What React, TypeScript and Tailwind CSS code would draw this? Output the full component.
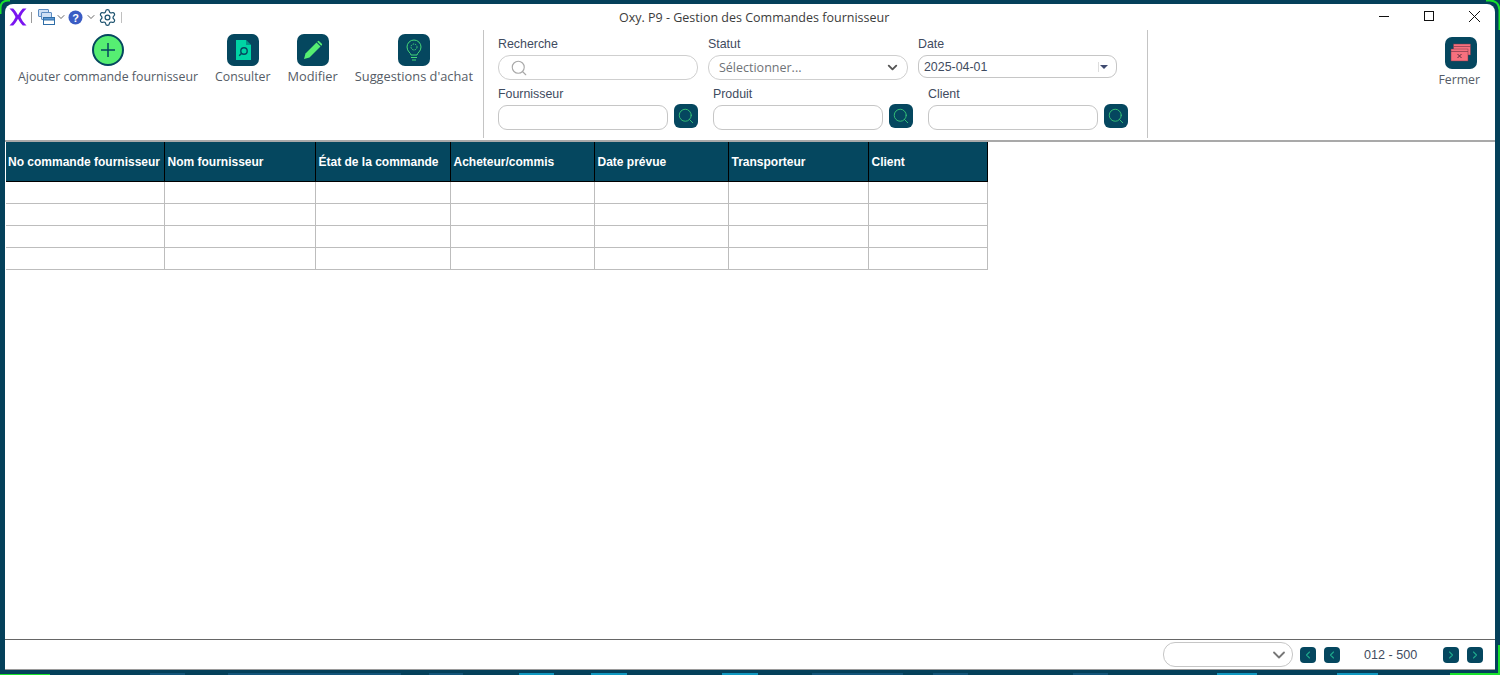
import React from "react";
import { ChevronDown, ChevronLeft, ChevronRight, Search, Settings } from "lucide-react";

const columns = [
  { label: "No commande fournisseur", w: "w-[158px]", pad: "pl-[2px]" },
  { label: "Nom fournisseur", w: "w-[151px]", pad: "pl-[3px]" },
  { label: "État de la commande", w: "w-[135px]", pad: "pl-[3px]" },
  { label: "Acheteur/commis", w: "w-[144px]", pad: "pl-[3px]" },
  { label: "Date prévue", w: "w-[134px]", pad: "pl-[3px]" },
  { label: "Transporteur", w: "w-[140px]", pad: "pl-[3px]" },
  { label: "Client", w: "w-[119px]", pad: "pl-[3px]" },
];

const taskbarBits = [
  { w: "w-[150px]", c: "bg-transparent" },
  { w: "w-[35px]", c: "bg-[#14557a]" },
  { w: "w-[43px]", c: "bg-transparent" },
  { w: "w-[173px]", c: "bg-[#14557a]" },
  { w: "w-[28px]", c: "bg-transparent" },
  { w: "w-[34px]", c: "bg-[#14557a]" },
  { w: "w-[56px]", c: "bg-transparent" },
  { w: "w-[35px]", c: "bg-[#1098c0]" },
  { w: "w-[37px]", c: "bg-transparent" },
  { w: "w-[36px]", c: "bg-[#1098c0]" },
  { w: "w-[95px]", c: "bg-transparent" },
  { w: "w-[36px]", c: "bg-[#1098c0]" },
  { w: "w-[54px]", c: "bg-transparent" },
  { w: "w-[91px]", c: "bg-[#14557a]" },
  { w: "w-[30px]", c: "bg-transparent" },
  { w: "w-[35px]", c: "bg-[#14557a]" },
  { w: "w-[105px]", c: "bg-transparent" },
  { w: "w-[35px]", c: "bg-[#14557a]" },
  { w: "w-[109px]", c: "bg-transparent" },
  { w: "w-[40px]", c: "bg-[#1098c0]" },
  { w: "w-[80px]", c: "bg-transparent" },
  { w: "w-[41px]", c: "bg-[#1098c0]" },
];

function AppLogo() {
  return (
    <svg width="18" height="18" viewBox="0 0 18 18">
      <path d="M0.500 0.500h3.700C6.500 3 8 5.200 9 7.300 10 5.200 11.500 3 13.800 0.500h3.700C14.500 3.500 12.600 6.200 11.500 9c1.100 2.800 3 5.500 6 8.500h-3.700C11.500 15 10 12.800 9 10.700 8 12.800 6.500 15 4.200 17.500H0.500C3.500 14.500 5.400 11.800 6.500 9 5.400 6.200 3.500 3.500 0.500 0.500z" fill="#7a14f0" />
    </svg>
  );
}

function WindowsIcon() {
  return (
    <svg width="17" height="16" viewBox="0 0 17 16" fill="#cfe0f5" stroke="#5c8cc2" strokeWidth="1">
      <rect x="0.500" y="0.500" width="10" height="7" rx="0.500" />
      <rect x="3.500" y="3.500" width="10" height="7" rx="0.500" />
      <rect x="5.500" y="8.500" width="11" height="7" fill="#fff" stroke="#2f6ea8" />
      <rect x="5.500" y="8.500" width="11" height="2.500" fill="#5b95d2" stroke="#2f6ea8" />
    </svg>
  );
}

function HelpIcon() {
  return (
    <svg width="15" height="15" viewBox="0 0 15 15">
      <circle cx="7.500" cy="7.500" r="7" fill="#3a5cc4" />
      <text x="7.500" y="11.500" textAnchor="middle" fontSize="11" fontWeight="700" fontFamily="Liberation Sans, sans-serif" fill="#fff">?</text>
    </svg>
  );
}

function IconTile({ children }: { children: React.ReactNode }) {
  return <div className="flex h-8 w-8 items-center justify-center rounded-[7px] bg-[#05475f]">{children}</div>;
}

function ToolButton({ label, icon, size }: { label: string; icon: React.ReactNode; size: string }) {
  return (
    <div className="flex flex-col items-center">
      {icon}
      <span className={`mt-[1px] whitespace-nowrap ${size} leading-[19px] text-[#555c66]`}>{label}</span>
    </div>
  );
}

function Field({ label, children, className }: { label: string; children: React.ReactNode; className: string }) {
  return (
    <div className={className}>
      <div className="h-[20px] whitespace-nowrap pt-[1px] font-['Liberation_Sans',sans-serif] text-[12.4px] leading-[16px] text-[#3f4b60]">{label}</div>
      {children}
    </div>
  );
}

function LookupField({ label, className }: { label: string; className: string }) {
  return (
    <Field label={label} className={className}>
      <div className="flex items-start">
        <div className="h-[25px] w-[170px] rounded-[9px] border border-[#c6c6c6] bg-white" />
        <button className="ml-[6px] -mt-[1px] flex h-6 w-6 items-center justify-center rounded-[6px] bg-[#05475f]">
          <Search size={18} strokeWidth={1.200} color="#37c777" />
        </button>
      </div>
    </Field>
  );
}

function PageButton({ children, className = "" }: { children: React.ReactNode; className?: string }) {
  return (
    <button className={`flex h-4 w-4 items-center justify-center rounded-[4px] bg-[#05475f] ${className}`}>{children}</button>
  );
}

export default function App() {
  return (
    <div className="relative flex h-[675px] w-[1500px] flex-col overflow-hidden bg-[#04405a] pl-[5px] pr-[5px] pt-[4px] font-['Open_Sans',sans-serif]">
      {/* window */}
      <div className="flex h-[666px] flex-col rounded-t-[8px] border-b border-b-[#9a9a9a] bg-white">
        {/* title bar */}
        <div className="flex h-[25px] shrink-0 items-center">
          <div className="flex w-[614px] items-center pl-[4px] pt-[1px]">
            <AppLogo />
            <div className="ml-[4px] h-[11px] w-px bg-[#9a9a9a]" />
            <div className="ml-[6px]"><WindowsIcon /></div>
            <ChevronDown size={12} strokeWidth={1.500} color="#333" />
            <div className="ml-[1px]"><HelpIcon /></div>
            <ChevronDown size={12} strokeWidth={1.500} color="#333" className="ml-[2px]" />
            <Settings size={19} strokeWidth={1.600} color="#1f5470" className="ml-[1px]" />
            <div className="ml-[4px] h-[11px] w-px bg-[#c0c0c0]" />
          </div>
          <div className="whitespace-nowrap pt-[3px] text-[12.5px] text-[#3c3c3c]">Oxy. P9 - Gestion des Commandes fournisseur</div>
          <div className="ml-auto flex items-center pr-[15px] pb-[1px]">
            <div className="h-px w-[10px] bg-[#111]" />
            <div className="ml-[35px] h-[10px] w-[10px] border border-[#111]" />
            <svg width="11" height="11" viewBox="0 0 11 11" className="ml-[35px]" stroke="#111" strokeWidth="1"><path d="M0 0l11 11M11 0L0 11" /></svg>
          </div>
        </div>

        {/* toolbar */}
        <div className="flex h-[113px] shrink-0 items-stretch border-b-2 border-b-[#a9a9a9]">
          <div className="flex gap-[17px] pl-[13px] pt-[5px]">
            <ToolButton
              label="Ajouter commande fournisseur"
              size="text-[12.35px]"
              icon={
                <div className="flex h-8 w-8 items-center justify-center rounded-full border-2 border-[#05475f] bg-[#56ee72]">
                  <svg width="16" height="16" viewBox="0 0 16 16" stroke="#05475f" strokeWidth="1.500"><path d="M8 1v14M1 8h14" /></svg>
                </div>
              }
            />
            <ToolButton
              label="Consulter"
              size="text-[12.3px]"
              icon={
                <IconTile>
                  <svg width="20" height="22" viewBox="0 0 20 22">
                    <path d="M3 1h10l5 5v15H3z" fill="#00d4a4" />
                    <path d="M13 1v5h5z" fill="#05475f" opacity="0.450" />
                    <circle cx="11" cy="12" r="3.200" fill="none" stroke="#05475f" strokeWidth="1.400" />
                    <path d="M8.700 14.300l-2.500 2.500" stroke="#05475f" strokeWidth="1.400" />
                  </svg>
                </IconTile>
              }
            />
            <ToolButton
              label="Modifier"
              size="text-[12.8px]"
              icon={
                <IconTile>
                  <svg width="20" height="20" viewBox="0 0 20 20">
                    <path d="M1 19l1.500-5.500L13.500 2.500l4 4L6.500 17.500z" fill="#56ee72" />
                    <path d="M14.800 1.200a1 1 0 0 1 1.400 0l2.600 2.600a1 1 0 0 1 0 1.400l-.6.600-4-4z" fill="#56ee72" />
                  </svg>
                </IconTile>
              }
            />
            <ToolButton
              label="Suggestions d'achat"
              size="text-[12.8px]"
              icon={
                <IconTile>
                  <svg width="20" height="24" viewBox="0 0 20 24" fill="none" stroke="#45d878" strokeWidth="1">
                    <path d="M7 17c0-2-4-3.500-4-8a7 7 0 0 1 14 0c0 4.500-4 6-4 8z" />
                    <circle cx="10" cy="9" r="3" strokeDasharray="1.500 1" />
                    <path d="M7 19.500h6M8 22h4" />
                  </svg>
                </IconTile>
              }
            />
          </div>

          <div className="ml-[10px] mb-[2px] mt-[1px] w-px bg-[#c4c4c4]" />

          {/* filters */}
          <div className="ml-[14px] flex w-[649px] flex-col pt-[6px]">
            <div className="flex h-[50px]">
              <Field label="Recherche" className="w-[210px]">
                <div className="flex h-[25px] w-[200px] items-center rounded-[12px] border border-[#cfcfcf] pl-[11px]">
                  <Search size={18} strokeWidth={1.500} color="#a8a8a8" />
                </div>
              </Field>
              <Field label="Statut" className="w-[210px]">
                <div className="flex h-[25px] w-[200px] items-center justify-between rounded-[12px] border border-[#cfcfcf] pl-[10px] pr-[7px]">
                  <span className="pt-[1px] text-[12.5px] text-[#6f7378]">Sélectionner...</span>
                  <ChevronDown size={15} strokeWidth={3} color="#555" />
                </div>
              </Field>
              <Field label="Date" className="w-[199px]">
                <div className="flex h-[23px] w-[199px] items-center rounded-[9px] border border-[#c6c6c6] pl-[5px] pr-[4px]">
                  <span className="pt-[1px] font-['Liberation_Sans',sans-serif] text-[12.4px] text-[#3f4b60]">2025-04-01</span>
                  <span className="ml-auto h-[10px] w-px bg-[#dddddd]" />
                  <span className="ml-[1px] mr-[4px] h-0 w-0 border-x-[4px] border-t-[4px] border-x-transparent border-t-[#3f4b70]" />
                </div>
              </Field>
            </div>
            <div className="flex">
              <LookupField label="Fournisseur" className="w-[215px]" />
              <LookupField label="Produit" className="w-[215px]" />
              <LookupField label="Client" className="w-[200px]" />
            </div>
          </div>

          <div className="mb-[2px] mt-[1px] w-px bg-[#c4c4c4]" />

          <div className="ml-auto flex flex-col items-center pr-[15px] pt-[8px]">
            <div className="ml-[3px]">
              <IconTile>
                <svg width="22" height="22" viewBox="0 0 22 22">
                  <rect x="3.500" y="2" width="17" height="11" fill="#f7707e" stroke="#7a3a4a" strokeWidth="0.500" />
                  <rect x="1" y="7" width="17" height="12" fill="#f7707e" stroke="#7a3a4a" strokeWidth="0.500" />
                  <path d="M1 9.500h17M3.500 4.500h17" stroke="#7a3a4a" strokeWidth="0.700" />
                  <path d="M7.500 12l4 4M11.500 12l-4 4" stroke="#5a3040" strokeWidth="1" />
                </svg>
              </IconTile>
            </div>
            <span className="mt-[1px] text-[12.3px] leading-[19px] text-[#555c66]">Fermer</span>
          </div>
        </div>

        {/* table area */}
        <div className="min-h-0 flex-1 pl-[1px]">
          <table className="table-fixed border-collapse font-['Liberation_Sans',sans-serif]">
            <thead>
              <tr className="h-[39px] bg-[#05475f]">
                {columns.map((c) => (
                  <th key={c.label} className={`${c.w} ${c.pad} border-r border-b border-r-black border-b-black pt-[2px] text-left text-[12px] font-bold whitespace-nowrap text-white`}>
                    {c.label}
                  </th>
                ))}
              </tr>
            </thead>
            <tbody>
              {[0, 1, 2, 3].map((r) => (
                <tr key={r} className="h-[22px]">
                  {columns.map((c) => (
                    <td key={c.label} className="border-r border-b border-[#bdbdbd]" />
                  ))}
                </tr>
              ))}
            </tbody>
          </table>
        </div>

        {/* footer */}
        <div className="flex h-[30px] shrink-0 items-center border-t border-t-[#666] pr-[12px]">
          <div className="ml-auto flex h-[25px] w-[130px] items-center justify-end rounded-[12px] border border-[#c6c6c6] pr-[3px]">
            <ChevronDown size={20} strokeWidth={2.200} color="#777" />
          </div>
          <PageButton className="ml-[7px]"><ChevronLeft size={12} strokeWidth={2.200} color="#1fa98c" /></PageButton>
          <PageButton className="ml-[8px]"><ChevronLeft size={12} strokeWidth={2.200} color="#1fa98c" /></PageButton>
          <span className="ml-[24px] w-[79px] pt-[1px] font-['Liberation_Sans',sans-serif] text-[12.6px] text-[#3f4b60]">012 - 500</span>
          <PageButton><ChevronRight size={12} strokeWidth={2.200} color="#1fa98c" /></PageButton>
          <PageButton className="ml-[8px]"><ChevronRight size={12} strokeWidth={2.200} color="#1fa98c" /></PageButton>
        </div>
      </div>

      {/* desktop taskbar peeking under the window */}
      <div className="absolute bottom-0 left-0 flex h-[2px] w-full">
        {taskbarBits.map((b, i) => (
          <div key={i} className={`${b.w} ${b.c}`} />
        ))}
      </div>

      {/* green window-glow corners */}
      <svg width="10" height="14" viewBox="0 0 10 14" className="absolute left-0 top-0" fill="none" stroke="#18e02c" strokeWidth="2"><path d="M0.500 14V8Q0.500 1 8 0.500h2" /></svg>
      <svg width="14" height="30" viewBox="0 0 14 30" className="absolute right-0 top-0" fill="none" stroke="#18e02c" strokeWidth="2"><path d="M0 0.500h4Q13 1 13.500 10V30" /></svg>
      <div className="absolute bottom-0 left-0 h-[1.500px] w-[50px] bg-[#18e02c]" />
      <div className="absolute bottom-0 right-0 h-[2px] w-[50px] bg-[#18e02c]" />
      <div className="absolute bottom-0 right-0 h-[30px] w-[2px] bg-[#18e02c]" />
    </div>
  );
}
